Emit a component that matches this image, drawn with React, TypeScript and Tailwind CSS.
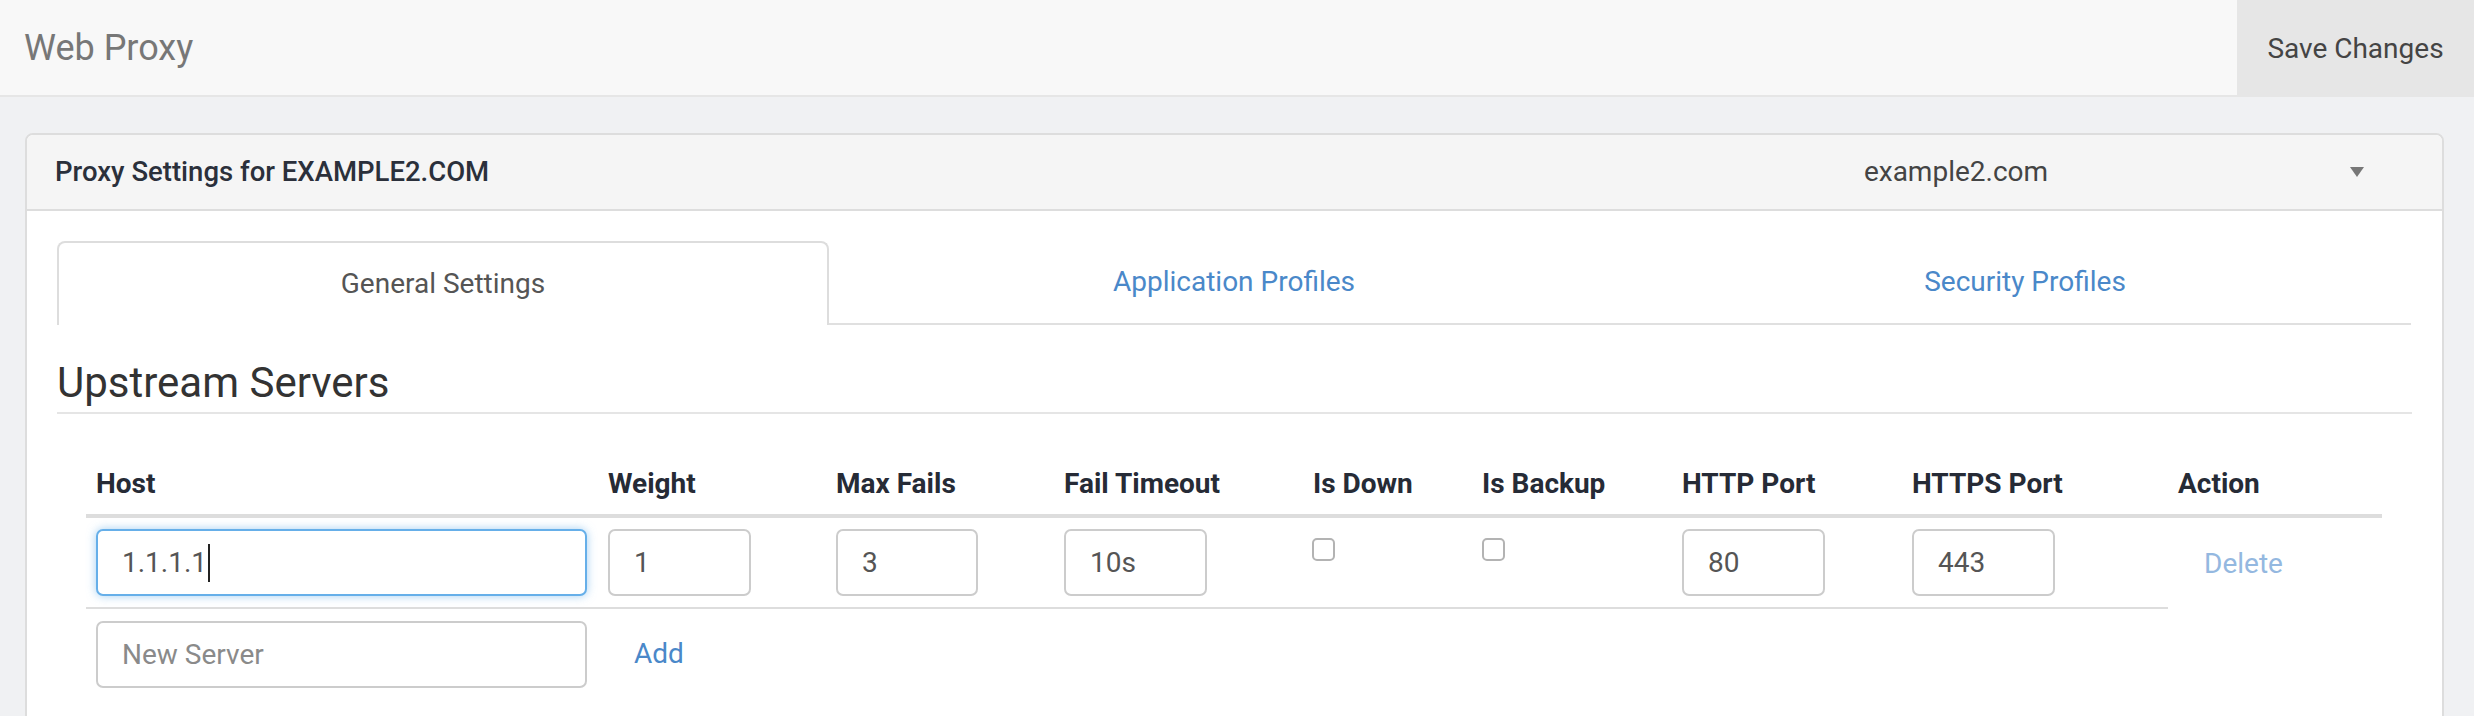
import React from "react"

const cols =
  "grid grid-cols-[512px_228px_228px_249px_169px_200px_230px_266px_214px]"

const headers = [
  "Host",
  "Weight",
  "Max Fails",
  "Fail Timeout",
  "Is Down",
  "Is Backup",
  "HTTP Port",
  "HTTPS Port",
  "Action",
]

function TextBox({ value, width }: { value: string; width: string }) {
  return (
    <input
      readOnly
      value={value}
      className={`${width} h-[67px] border-2 border-[#cccccc] rounded-[7px] px-[24px] text-[28px] text-[#555] bg-white outline-none`}
    />
  )
}

function Checkbox() {
  return (
    <span className="block mt-[9px] w-[23px] h-[23px] border-2 border-[#b3b3b3] rounded-[5px] bg-white" />
  )
}

export default function App() {
  return (
    <div
      className="min-h-screen bg-[#f0f1f3]"
      style={{ fontFamily: 'Roboto, "Liberation Sans", sans-serif' }}
    >
      {/* top bar */}
      <div className="flex h-[97px] bg-[#f8f8f8] border-b-2 border-[#e6e6e6]">
        <div className="flex-1 flex items-center pl-[24px] text-[36px] text-[#777]">
          Web Proxy
        </div>
        <button className="w-[237px] h-[97px] -mb-[2px] bg-[#e6e6e6] text-[28px] text-[#444]">
          Save Changes
        </button>
      </div>

      <div className="pt-[36px] pl-[25px] pr-[30px]">
        <div className="border-2 border-[#dddddd] rounded-[8px] bg-white overflow-hidden">
          {/* panel header */}
          <div className="flex items-center h-[76px] bg-[#f5f5f5] border-b-2 border-[#dddddd]">
            <div className="flex-1 pl-[28px] text-[27.5px] font-medium text-[#2b303b]">
              Proxy Settings for EXAMPLE2.COM
            </div>
            <div className="w-[880px] flex items-center">
              <span className="flex-1 text-center text-[28px] text-[#444]">
                example2.com
              </span>
              <svg width="14" height="10" viewBox="0 0 14 10" className="mr-[78px]">
                <path d="M0 0 L14 0 L7 10 Z" fill="#777" />
              </svg>
            </div>
          </div>

          {/* panel body */}
          <div className="px-[30px] pt-[30px] pb-[40px]">
            <div className="flex text-[28px]">
              <div className="w-[772px] h-[84px] flex items-center justify-center border-t-2 border-x-2 border-[#dddddd] rounded-t-[8px] text-[#555]">
                General Settings
              </div>
              <div className="w-[810px] h-[84px] flex items-center justify-center border-b-2 border-[#e0e0e0] text-[#4a88c9]">
                Application Profiles
              </div>
              <div className="w-[772px] h-[84px] flex items-center justify-center border-b-2 border-[#e0e0e0] text-[#4a88c9]">
                Security Profiles
              </div>
            </div>

            <h2 className="mt-[34px] pb-[5px] text-[42px] leading-[48px] text-[#333] border-b-2 border-[#e5e5e5]">
              Upstream Servers
            </h2>

            <div className="ml-[29px] mt-[40px] w-[2296px]">
              <div className={`${cols} border-b-4 border-[#dddddd]`}>
                {headers.map((h) => (
                  <div
                    key={h}
                    className="px-[10px] py-[10px] text-[28px] leading-[40px] font-bold text-[#262b36]"
                  >
                    {h}
                  </div>
                ))}
              </div>

              <div className={cols}>
                <div className="px-[10px] py-[11px] border-b-2 border-[#dddddd]">
                  <div className="w-[491px] h-[67px] flex items-center border-2 border-[#66afe9] rounded-[7px] px-[24px] bg-white text-[28px] text-[#555] shadow-[0_0_10px_rgba(102,175,233,0.6)]">
                    1.1.1.1
                    <span className="inline-block w-[2px] h-[38px] bg-[#222] ml-[1px]" />
                  </div>
                </div>
                <div className="px-[10px] py-[11px] border-b-2 border-[#dddddd]">
                  <TextBox value="1" width="w-[143px]" />
                </div>
                <div className="px-[10px] py-[11px] border-b-2 border-[#dddddd]">
                  <TextBox value="3" width="w-[142px]" />
                </div>
                <div className="px-[10px] py-[11px] border-b-2 border-[#dddddd]">
                  <TextBox value="10s" width="w-[143px]" />
                </div>
                <div className="px-[9px] py-[11px] border-b-2 border-[#dddddd]">
                  <Checkbox />
                </div>
                <div className="px-[10px] py-[11px] border-b-2 border-[#dddddd]">
                  <Checkbox />
                </div>
                <div className="px-[10px] py-[11px] border-b-2 border-[#dddddd]">
                  <TextBox value="80" width="w-[143px]" />
                </div>
                <div className="px-[10px] py-[11px] border-b-2 border-[#dddddd]">
                  <TextBox value="443" width="w-[143px]" />
                </div>
                <div className="flex items-center pl-[36px] py-[11px] text-[28px] text-[#94b8e0]">
                  Delete
                </div>
              </div>

              <div className={cols}>
                <div className="px-[10px] pt-[12px] pb-[11px]">
                  <input
                    readOnly
                    placeholder="New Server"
                    className="w-[491px] h-[67px] border-2 border-[#cccccc] rounded-[7px] px-[24px] text-[28px] text-[#555] placeholder:text-[#8a8a8a] bg-white outline-none"
                  />
                </div>
                <div className="flex items-center pl-[36px] py-[11px] text-[28px] text-[#4a88c9]">
                  Add
                </div>
              </div>
            </div>
          </div>
        </div>
      </div>
    </div>
  )
}
